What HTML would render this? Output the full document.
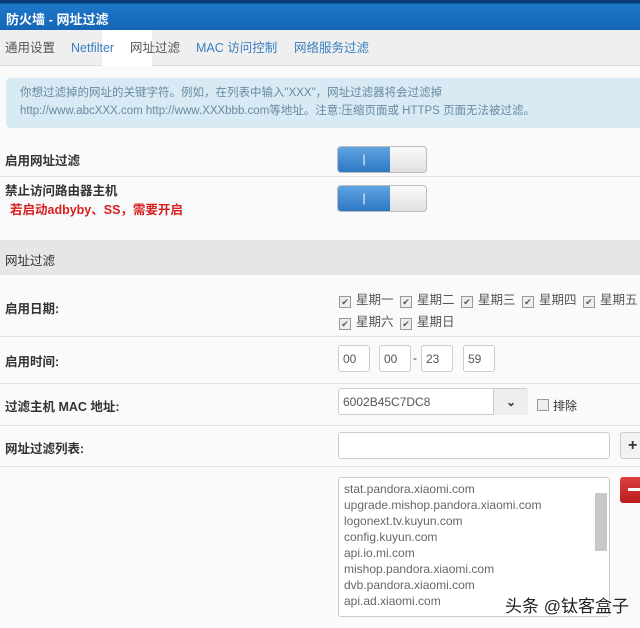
<!DOCTYPE html>
<html><head><meta charset="utf-8"><style>
body{margin:0;width:640px;height:628px;overflow:hidden;background:#fafafa;font-family:"Liberation Sans","Noto Sans CJK SC",sans-serif;font-size:12px;color:#333;position:relative}
.a{position:absolute}
.hdr{left:0;top:0;width:640px;height:30px;background:linear-gradient(#0a3d78 0,#0a3d78 3px,#1e78c8 4px,#1565b5 30px);color:#fff;font-weight:bold;font-size:13px}
.tabs{left:0;top:30px;width:640px;height:35px;background:#efefef;border-bottom:1px solid #ddd}
.tab{position:absolute;top:10px;line-height:16px;font-size:12.5px;color:#3a7fbf}
.info{left:6px;top:78px;width:640px;height:50px;background:#d8ebf5;border-radius:4px;color:#6a8aa0;font-size:11.5px;line-height:18px}
.lbl{font-weight:bold;font-size:12.5px;color:#333}
.sw{width:88px;height:25px;border:1px solid #bbb;border-radius:4px;background:linear-gradient(#fafafa,#e0e0e0);overflow:hidden}
.sw div{width:52px;height:25px;background:linear-gradient(#5fa3e0,#2e78c4);color:#fff;text-align:center;line-height:25px}
.line{left:0;width:640px;height:1px;background:#e2e2e2}
.inp{background:#fff;border:1px solid #ccc;border-radius:3px;color:#555;font-size:12px;box-sizing:border-box}
.cb{display:inline-block;width:10px;height:10px;border:1px solid #999;background:#eee;font-size:9px;line-height:10px;text-align:center;vertical-align:-1px;margin:0 5px 0 3px}
</style></head><body>
<div class="a hdr"><span class="a" style="left:6px;top:9px">防火墙 - 网址过滤</span></div>
<div class="a tabs">
<div class="a" style="left:102px;top:0;width:50px;height:36px;background:#fff"></div>
<span class="tab" style="left:5px;color:#555">通用设置</span>
<span class="tab" style="left:71px">Netfilter</span>
<span class="tab" style="left:130px;color:#555">网址过滤</span>
<span class="tab" style="left:196px">MAC 访问控制</span>
<span class="tab" style="left:294px">网络服务过滤</span>
</div>
<div class="a info"><div style="padding:6px 0 0 14px">你想过滤掉的网址的关键字符。例如，在列表中输入"XXX"，网址过滤器将会过滤掉<br>http://www.abcXXX.com http://www.XXXbbb.com等地址。注意:压缩页面或 HTTPS 页面无法被过滤。</div></div>
<span class="a lbl" style="left:5px;top:150px">启用网址过滤</span>
<div class="a sw" style="left:337px;top:146px"><div>|</div></div>
<div class="a line" style="top:176px"></div>
<span class="a lbl" style="left:5px;top:180px">禁止访问路由器主机</span>
<span class="a" style="left:10px;top:199px;color:#d42020;font-weight:bold;font-size:12.5px">若启动adbyby、SS，需要开启</span>
<div class="a sw" style="left:337px;top:185px"><div>|</div></div>
<div class="a" style="left:0;top:240px;width:640px;height:35px;background:#e6e6e6"></div>
<span class="a lbl" style="left:5px;top:250px;font-weight:normal">网址过滤</span>
<span class="a lbl" style="left:5px;top:298px">启用日期:</span>
<div class="a" style="left:336px;top:289px;font-size:12.5px;color:#555;white-space:nowrap"><span class="cb">✔</span>星期一 <span class="cb">✔</span>星期二 <span class="cb">✔</span>星期三 <span class="cb">✔</span>星期四 <span class="cb">✔</span>星期五</div>
<div class="a" style="left:336px;top:311px;font-size:12.5px;color:#555"><span class="cb">✔</span>星期六 <span class="cb">✔</span>星期日</div>
<div class="a line" style="top:336px"></div>
<span class="a lbl" style="left:5px;top:351px">启用时间:</span>
<div class="a inp" style="left:338px;top:345px;width:32px;height:27px;padding:6px 4px">00</div>
<div class="a inp" style="left:379px;top:345px;width:32px;height:27px;padding:6px 4px">00</div>
<span class="a" style="left:413px;top:351px">-</span>
<div class="a inp" style="left:421px;top:345px;width:32px;height:27px;padding:6px 4px">23</div>
<div class="a inp" style="left:463px;top:345px;width:32px;height:27px;padding:6px 4px">59</div>
<div class="a line" style="top:383px"></div>
<span class="a lbl" style="left:5px;top:396px">过滤主机 MAC 地址:</span>
<div class="a inp" style="left:338px;top:388px;width:190px;height:27px;padding:6px 4px">6002B45C7DC8</div>
<div class="a" style="left:493px;top:389px;width:34px;height:26px;background:#eee;border-left:1px solid #ccc;text-align:center;line-height:26px;font-weight:bold">⌄</div>
<span class="a" style="left:537px;top:397px"><span class="cb" style="margin:0 4px 0 0"></span>排除</span>
<div class="a line" style="top:425px"></div>
<span class="a lbl" style="left:5px;top:438px">网址过滤列表:</span>
<div class="a inp" style="left:338px;top:432px;width:272px;height:27px"></div>
<div class="a" style="left:620px;top:432px;width:24px;height:27px;background:#f2f2f2;border:1px solid #ccc;border-radius:3px;font-weight:bold;font-size:16px;line-height:26px;padding-left:7px;box-sizing:border-box">+</div>
<div class="a line" style="top:466px"></div>
<div class="a inp" style="left:338px;top:477px;width:272px;height:140px;padding:3px 0 0 5px;line-height:16px;font-size:12px;color:#666">stat.pandora.xiaomi.com<br>upgrade.mishop.pandora.xiaomi.com<br>logonext.tv.kuyun.com<br>config.kuyun.com<br>api.io.mi.com<br>mishop.pandora.xiaomi.com<br>dvb.pandora.xiaomi.com<br>api.ad.xiaomi.com</div>
<div class="a" style="left:595px;top:493px;width:12px;height:58px;background:#c8c8c8"></div>
<div class="a" style="left:620px;top:477px;width:24px;height:26px;background:linear-gradient(#e04040,#b81c1c);border-radius:3px"><div style="margin:11px 0 0 8px;width:16px;height:3px;background:#fff"></div></div>
<span class="a" style="left:505px;top:592px;font-size:17px;color:#222;text-shadow:0 0 2px #fff">头条 @钛客盒子</span>
</body></html>
